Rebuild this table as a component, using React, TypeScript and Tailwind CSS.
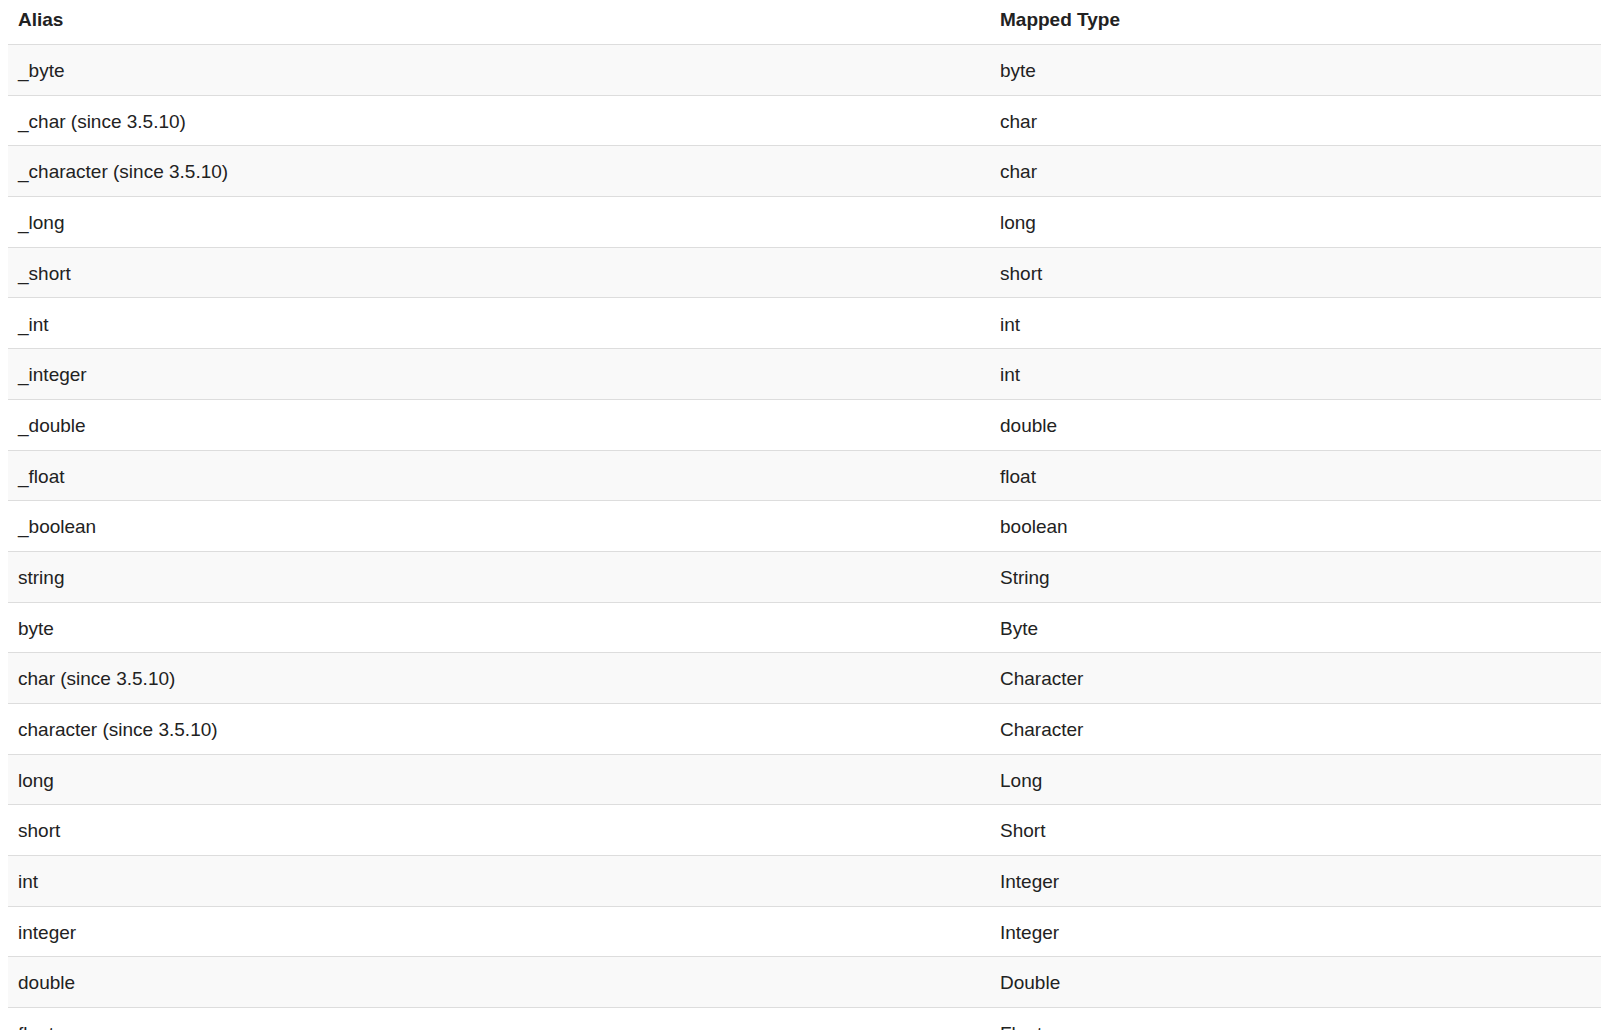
import React from 'react';

const rows: [string, string][] = [
  ['_byte', 'byte'],
  ['_char (since 3.5.10)', 'char'],
  ['_character (since 3.5.10)', 'char'],
  ['_long', 'long'],
  ['_short', 'short'],
  ['_int', 'int'],
  ['_integer', 'int'],
  ['_double', 'double'],
  ['_float', 'float'],
  ['_boolean', 'boolean'],
  ['string', 'String'],
  ['byte', 'Byte'],
  ['char (since 3.5.10)', 'Character'],
  ['character (since 3.5.10)', 'Character'],
  ['long', 'Long'],
  ['short', 'Short'],
  ['int', 'Integer'],
  ['integer', 'Integer'],
  ['double', 'Double'],
  ['float', 'Float'],
  ['boolean', 'Boolean'],
];

const App = () => {
  return (
    <div className="bg-white min-h-screen pl-2 text-[#222] font-['Liberation_Sans',Arial,sans-serif] text-[19px]">
      <div className="w-[1593px]">
        <div className="flex h-[45px] border-b-[1.5px] border-[#ddd] font-bold">
          <div className="w-[982px] pl-[10px] pt-[6px]">Alias</div>
          <div className="flex-1 pl-[10px] pt-[6px]">Mapped Type</div>
        </div>
        {rows.map(([alias, type], i) => (
          <div
            key={i}
            className={`flex h-[50.7px] items-center pt-[3px] border-b border-[#ddd] ${i % 2 === 0 ? 'bg-[#f9f9f9]' : 'bg-white'}`}
          >
            <div className="w-[982px] pl-[10px]">{alias}</div>
            <div className="flex-1 pl-[10px]">{type}</div>
          </div>
        ))}
      </div>
    </div>
  );
};

export default App;
